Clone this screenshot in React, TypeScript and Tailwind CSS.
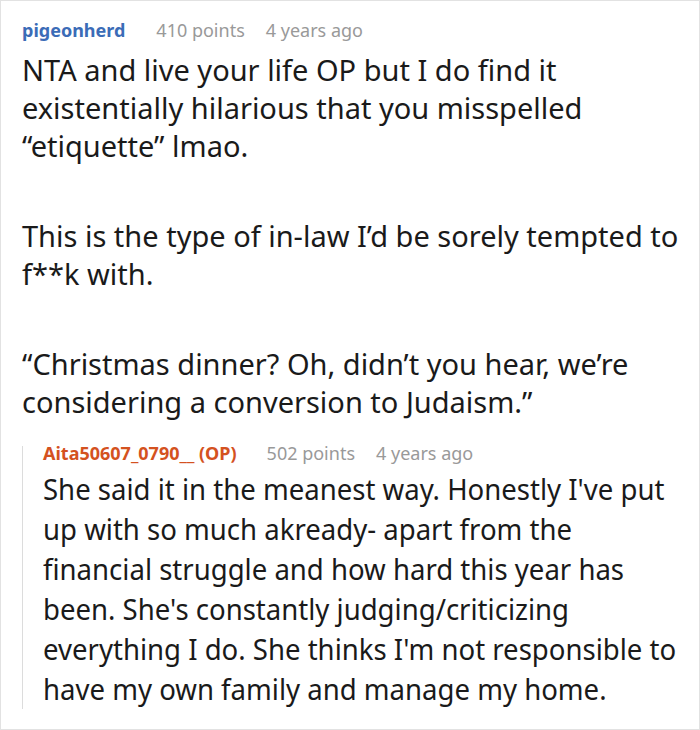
export default function App() {
  return (
    <div className="w-[700px] h-[730px] bg-white border border-[#e2e2e2] overflow-hidden" style={{ fontFamily: '"Noto Sans", sans-serif' }}>
      <div className="pl-[21px] pt-[16px]">
        {/* parent comment */}
        <div className="flex items-baseline text-[18px] leading-[26px]">
          <span className="font-bold text-[#3b6cb7]">pigeonherd</span>
          <span className="ml-[31px] text-[#999]">410 points</span>
          <span className="ml-[21px] text-[#999]">4 years ago</span>
        </div>
        <div className="mt-[8px] text-[29px] leading-[38px] text-[#1a1a1a] whitespace-nowrap">
          <p>NTA and live your life OP but I do find it<br />existentially hilarious that you misspelled<br />“etiquette” lmao.</p>
          <p className="mt-[52px]">This is the type of in-law I’d be sorely tempted to<br />f**k with.</p>
          <p className="mt-[52px]">“Christmas dinner? Oh, didn’t you hear, we’re<br />considering a conversion to Judaism.”</p>
        </div>

        {/* reply */}
        <div className="mt-[25px] border-l border-[#dcdcdc] pl-[20px]">
          <div className="flex items-baseline text-[18px] leading-[14px]">
            <span className="font-bold text-[#d4521f]">Aita50607_0790__ (OP)</span>
            <span className="ml-[30px] text-[#999]">502 points</span>
            <span className="ml-[21px] text-[#999]">4 years ago</span>
          </div>
          <p className="mt-[9px] text-[29px] leading-[40px] text-[#1a1a1a] whitespace-nowrap origin-left scale-x-[0.95]">
            She said it in the meanest way. Honestly I've put<br />
            up with so much akready- apart from the<br />
            financial struggle and how hard this year has<br />
            been. She's constantly judging/criticizing<br />
            everything I do. She thinks I'm not responsible to<br />
            have my own family and manage my home.
          </p>
        </div>
      </div>
    </div>
  )
}
